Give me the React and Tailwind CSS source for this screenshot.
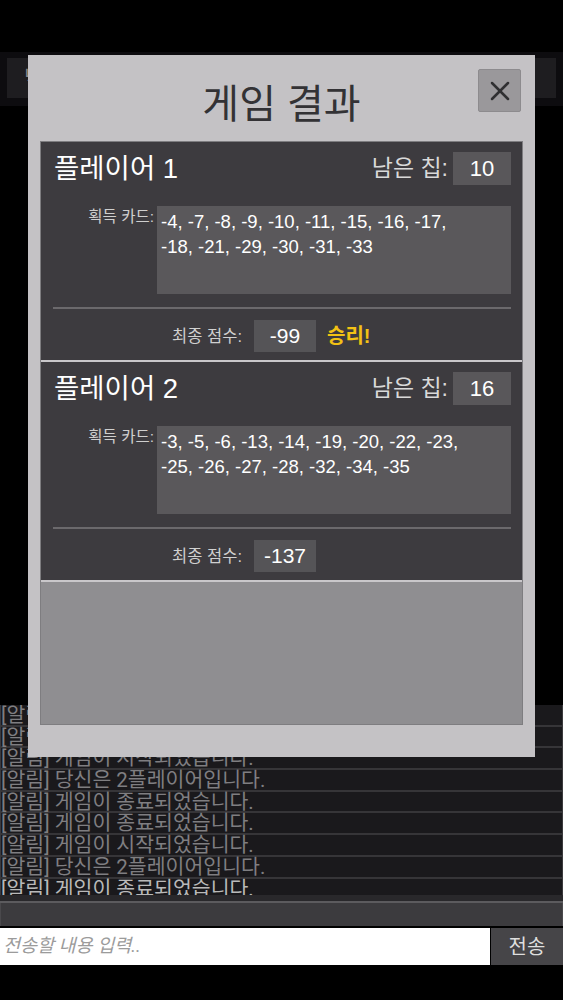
import { X } from "lucide-react"

const players = [
    {
        name: "플레이어 1",
        chips: 10,
        cards: ["-4, -7, -8, -9, -10, -11, -15, -16, -17,", "-18, -21, -29, -30, -31, -33"],
        score: -99,
        win: true,
    },
    {
        name: "플레이어 2",
        chips: 16,
        cards: ["-3, -5, -6, -13, -14, -19, -20, -22, -23,", "-25, -26, -27, -28, -32, -34, -35"],
        score: -137,
        win: false,
    },
]

const logs = [
    "[알림] 당신은 2플레이어입니다.",
    "[알림] 게임이 종료되었습니다.",
    "[알림] 게임이 시작되었습니다.",
    "[알림] 당신은 2플레이어입니다.",
    "[알림] 게임이 종료되었습니다.",
    "[알림] 게임이 종료되었습니다.",
    "[알림] 게임이 시작되었습니다.",
    "[알림] 당신은 2플레이어입니다.",
    "[알림] 게임이 종료되었습니다.",
]

const sans = { fontFamily: '"Liberation Sans", "Noto Sans CJK KR", sans-serif' }
const android = { fontFamily: 'Roboto, "Noto Sans CJK KR", sans-serif' }

function PlayerResult({ player, first }) {
    return (
        <div className={`bg-[#3d3b3f] pt-[10px] pb-[8px] pl-[12px] pr-[11px] ${first ? "" : "border-t-2 border-[#c9c7ca]"}`}>
            {/* 이름 + 남은 칩 */}
            <div className="flex items-center justify-between h-[33px]">
                <span className="text-[27.5px] text-white pl-[1px] leading-none">{player.name}</span>
                <div className="flex items-center">
                    <span className="text-[23px] text-[#d9d9d9] mr-[5px] leading-none">남은 칩:</span>
                    <div className="w-[58px] h-[33px] bg-[#59575a] flex items-center justify-center text-[22px] text-white">
                        {player.chips}
                    </div>
                </div>
            </div>

            {/* 획득 카드 */}
            <div className="flex mt-[21px]">
                <div className="w-[102px] text-right text-[15.5px] text-[#cfcfcf] pr-[1px] leading-[22px]">획득 카드:</div>
                <div className="ml-[2px] flex-1 h-[88px] bg-[#5a585b] pl-[4px] pt-[3px] text-[18.5px] leading-[25px] text-white">
                    {player.cards.map((line, i) => (
                        <div key={i} className="whitespace-nowrap">{line}</div>
                    ))}
                </div>
            </div>

            <div className="mt-[13px] h-[2px] bg-[#6b696c]" />

            {/* 최종 점수 */}
            <div className="flex items-center mt-[11px] h-[32px]">
                <div className="w-[189px] text-right text-[16.5px] text-[#d0d0d0]">최종 점수:</div>
                <div className="ml-[12px] w-[62px] h-[32px] bg-[#555457] flex items-center justify-center text-[21px] text-white">
                    {player.score}
                </div>
                {player.win && (
                    <span className="ml-[11px] text-[20px] font-bold text-[#f3c214]">승리!</span>
                )}
            </div>
        </div>
    )
}

export default function App() {
    return (
        <div className="relative w-full h-[1000px] bg-black overflow-hidden flex flex-col" style={sans}>

            {/* 상단 입력 바 */}
            <div className="h-[52px]" />
            <div className="h-[54px] bg-[#0d0c0f] px-[7px] pt-[6px]">
                <div className="h-[40px] bg-[#1e1d20] flex items-center pl-[17px] text-[20px] text-[#8a898c]" style={android}>
                    닉네임 입력
                </div>
            </div>

            <div className="flex-1" />

            {/* 채팅 로그 */}
            <div className="h-[190px] overflow-hidden bg-[#1a191c] border-x border-[#3a393c]" style={android}>
                {logs.map((msg, i) => (
                    <div
                        key={i}
                        className={`h-[21.7px] border-b-2 border-[#363538] text-[20.5px] leading-[20px] whitespace-nowrap ${i === logs.length - 1 ? "text-[#b9b9b9]" : "text-[#7f7e81]"}`}
                    >
                        {msg}
                    </div>
                ))}
            </div>
            <div className="h-[6px] bg-[#29282b]" />
            <div className="h-[2px] bg-[#5c5b5e]" />
            <div className="h-[23px] bg-[#3c3b3e] border-x border-[#4a494c]" />
            <div className="h-[2px]" />

            {/* 입력 */}
            <div className="h-[37px] flex" style={android}>
                <input
                    type="text"
                    placeholder="전송할 내용 입력.."
                    className="flex-1 bg-white outline-none px-[3px] text-[18.5px] italic placeholder-[#9b9b9b] text-black"
                />
                <button className="w-[72px] ml-px bg-[#464548] text-[20px] text-[#dedede]">전송</button>
            </div>
            <div className="h-[35px]" />

            {/* 게임 결과 모달 */}
            <div className="absolute left-[28px] top-[55px] w-[507px] h-[702px] bg-[#c4c2c5] flex flex-col">
                <div className="relative h-[86px] flex items-center justify-center pt-[12px]">
                    <span className="text-[40px] text-[#333235]">게임 결과</span>
                    <button className="absolute right-[14px] top-[14px] w-[43px] h-[43px] bg-[#9a989b] border border-[#8d8b8e] rounded-[2px] flex items-center justify-center">
                        <X size={32} strokeWidth={1.9} className="text-[#303032]" />
                    </button>
                </div>
                <div className="mx-[12px] h-[584px] border border-[#7e7d80] flex flex-col">
                    {players.map((p, i) => (
                        <PlayerResult key={p.name} player={p} first={i === 0} />
                    ))}
                    <div className="flex-1 bg-[#8f8e91] border-t-2 border-[#c9c7ca]" />
                </div>
            </div>
        </div>
    )
}
